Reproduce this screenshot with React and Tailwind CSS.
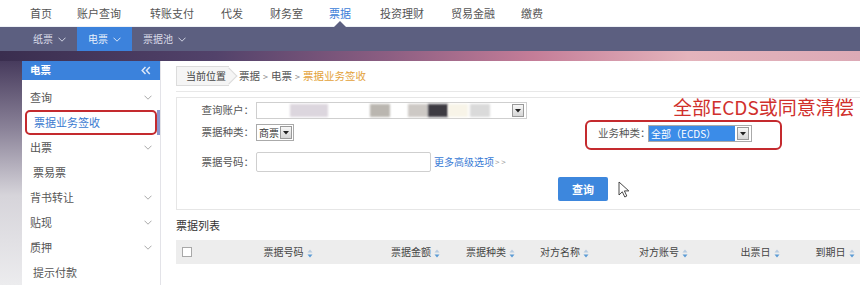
import React from "react";

const navItems = [
  ["首页", "ml-[30px]"],
  ["账户查询", "ml-[25px]"],
  ["转账支付", "ml-[29px]"],
  ["代发", "ml-[27px]"],
  ["财务室", "ml-[27px]"],
  ["票据", "ml-[26px]"],
  ["投资理财", "ml-[29px]"],
  ["贸易金融", "ml-[27px]"],
  ["缴费", "ml-[26px]"],
];

const Chev = ({ className = "", color = "currentColor" }) => (
  <svg width="8" height="5" viewBox="0 0 8 5" className={className}>
    <path d="M0.5 0.7L4 4.2L7.5 0.7" fill="none" stroke={color} strokeWidth="1" />
  </svg>
);

const Sort = () => (
  <svg width="6" height="9" viewBox="0 0 6 9" className="ml-[3px] mt-[3px]">
    <path d="M3 0.5L5.5 3.5H0.5Z" fill="#b7cbe0" />
    <path d="M3 8.5L5.5 5.5H0.5Z" fill="#5b9bd5" />
  </svg>
);

const DropBtn = () => (
  <div className="w-[12px] h-[13px] border border-[#9a9a9a] bg-gradient-to-b from-[#f7f7f7] to-[#d6d6d6] flex items-center justify-center shrink-0">
    <svg width="6" height="4" viewBox="0 0 6 4">
      <path d="M0 0H6L3 3.5Z" fill="#222" />
    </svg>
  </div>
);

const sideItems = [
  { t: "查询", chev: true },
  { t: "票据业务签收", sel: true },
  { t: "出票", chev: true },
  { t: "票易票", indent: true },
  { t: "背书转让", chev: true },
  { t: "贴现", chev: true },
  { t: "质押", chev: true },
  { t: "提示付款", indent: true },
];

const cols = [
  ["票据号码", "w-[176px]"],
  ["票据金额", "w-[79px]"],
  ["票据种类", "w-[71px]"],
  ["对方名称", "w-[77px]"],
  ["对方账号", "w-[121px]"],
  ["出票日", "w-[72px]"],
  ["到期日", "w-[78px]"],
];

export default function App() {
  return (
    <div className="relative w-[860px] h-[285px] overflow-hidden bg-white font-['Noto_Sans_CJK_SC',sans-serif] text-[#555] leading-none">
      {/* top nav */}
      <div className="h-[27px] flex items-stretch bg-white text-[11px] border-b border-[#eef1f6]">
        {navItems.map(([t, ml]) => (
          <div key={t} className={`relative flex items-center ${ml} ${t === "票据" ? "text-[#3b7dd8]" : "text-[#555]"}`}>
            {t}
            {t === "票据" && (
              <div className="absolute bottom-[-1px] left-1/2 -translate-x-1/2 w-0 h-0 border-l-[6px] border-r-[6px] border-b-[6px] border-l-transparent border-r-transparent border-b-[#5c5f80]" />
            )}
          </div>
        ))}
      </div>

      {/* sub nav */}
      <div className="h-[24px] bg-[#5c5f80] flex items-stretch pl-[22px] text-[10px] text-[#d9dbe8]">
        <div className="flex items-center px-[11px] gap-[5px]">
          <span>纸票</span>
          <Chev color="#cfd2e2" />
        </div>
        <div className="flex items-center px-[11px] gap-[5px] bg-[#3c82dc] text-[#e8f0fb] w-[55px]">
          <span>电票</span>
          <Chev color="#d6e4f7" />
        </div>
        <div className="flex items-center px-[11px] gap-[5px]">
          <span>票据池</span>
          <Chev color="#cfd2e2" />
        </div>
      </div>

      {/* strip */}
      <div className="h-[10px] bg-[linear-gradient(90deg,#3a2e4f_0%,#52426a_25%,#8c5e82_45%,#c47d98_62%,#e4b4bc_80%,#dcaab6_100%)]" />

      {/* body */}
      <div className="flex h-[224px]">
        <div className="w-[22px] shrink-0 bg-[linear-gradient(180deg,#473b5d_0%,#8a8298_30%,#d6d4da_60%,#ececee_100%)]" />

        {/* sidebar */}
        <div className="w-[138px] shrink-0 bg-white flex flex-col">
          <div className="h-[24px] bg-[#3b82dc] flex items-center justify-between pl-[8px] pr-[9px]">
            <span className="text-white font-bold text-[10.5px]">电票</span>
            <svg width="10" height="9" viewBox="0 0 10 9">
              <path d="M4.5 1L1.2 4.5L4.5 8M8.8 1L5.5 4.5L8.8 8" fill="none" stroke="#dce8f9" strokeWidth="1.5" />
            </svg>
          </div>
          <div className="pt-[5px] flex flex-col">
            {sideItems.map((it) =>
              it.sel ? (
                <div key={it.t} className="h-[25px] flex items-stretch">
                  <div className="flex-1 ml-[3px] border-2 border-[#c42a2e] rounded-[5px] flex items-center pl-[7px] text-[11px] text-[#3a7ad0]">
                    {it.t}
                  </div>
                  <div className="w-[3px] bg-[#8a96cc]" />
                </div>
              ) : (
                <div
                  key={it.t}
                  className={`h-[25px] flex items-center justify-between pr-[8px] text-[11px] text-[#555] ${it.indent ? "pl-[11px]" : "pl-[8px]"}`}
                >
                  <span>{it.t}</span>
                  {it.chev && <Chev color="#aaaaaa" />}
                </div>
              )
            )}
          </div>
        </div>

        {/* main */}
        <div className="flex-1 min-w-0 overflow-hidden bg-white border-l border-[#e3e3e8] pl-[15px] flex flex-col">
          {/* breadcrumb */}
          <div className="h-[31px] shrink-0 border-b border-[#e8e8e8] flex items-center text-[10.5px]">
            <div className="relative h-[20px] pl-[9px] pr-[3px] bg-[#f5f5f5] border border-r-0 border-[#dcdcdc] flex items-center text-[#444]">
              <div className="absolute right-[-6px] top-[3px] w-[12px] h-[12px] rotate-45 bg-[#f5f5f5] border-t border-r border-[#dcdcdc]" />
              <span className="relative z-10 text-[10px]">当前位置</span>
            </div>
            <span className="ml-[10px] text-[#555]">票据</span>
            <span className="mx-[3px] text-[#888] text-[9px]">&gt;</span>
            <span className="text-[#555]">电票</span>
            <span className="mx-[3px] text-[#888] text-[9px]">&gt;</span>
            <span className="text-[#e3a23a]">票据业务签收</span>
          </div>

          {/* form panel */}
          <div className="mt-[5px] h-[113px] shrink-0 border border-r-0 border-[#e6e6e6] pt-[4px] flex flex-col text-[10.5px]">
            {/* row 1 */}
            <div className="h-[17px] flex items-center">
              <div className="w-[77px] shrink-0 text-right whitespace-nowrap text-[#555]">查询账户：</div>
              <div className="ml-[2px] w-[271px] shrink-0 h-[17px] border border-[#cfcfcf] flex items-center bg-white">
                <div className="ml-[33px] w-[38px] h-[13px] bg-[#dcd6de] blur-[1px]" />
                <div className="ml-[42px] w-[20px] h-[13px] bg-[#bab6b0] blur-[1px]" />
                <div className="ml-[18px] w-[20px] h-[13px] bg-[#cdc9c5] blur-[1px]" />
                <div className="w-[20px] h-[13px] bg-[#3d3b42] blur-[1px]" />
                <div className="w-[20px] h-[13px] bg-[#f8f4e8] blur-[1px]" />
                <div className="ml-[2px] w-[20px] h-[13px] bg-[#dadada] blur-[1px]" />
                <div className="ml-auto mr-[2px]">
                  <DropBtn />
                </div>
              </div>
            </div>

            {/* row 2 */}
            <div className="mt-[1px] h-[30px] flex items-start">
              <div className="mt-[4px] h-[17px] flex items-center">
                <div className="w-[77px] shrink-0 text-right whitespace-nowrap text-[#555]">票据种类：</div>
                <div className="ml-[2px] w-[38px] shrink-0 h-[17px] border border-[#aaaaaa] flex items-center justify-between pl-[2px] pr-[1px] bg-white">
                  <span className="text-[10px] text-[#333] whitespace-nowrap">商票</span>
                  <DropBtn />
                </div>
              </div>
              <div className="ml-[291px] w-[197px] shrink-0 h-[30px] border-2 border-[#c42a2e] rounded-[6px] pl-[11px] pt-[3px] flex items-start">
                <div className="h-[17px] flex items-center">
                  <div className="w-[50px] shrink-0 whitespace-nowrap text-[#555]">业务种类：</div>
                  <div className="w-[104px] shrink-0 h-[17px] border border-[#aaaaaa] flex items-center bg-white">
                    <div className="w-[86px] h-full bg-[#3b8ce8] text-white text-[10px] flex items-center pl-[2px] whitespace-nowrap">
                      全部（ECDS）
                    </div>
                    <div className="ml-[2px]">
                      <DropBtn />
                    </div>
                  </div>
                </div>
              </div>
            </div>

            {/* row 3 */}
            <div className="mt-[2px] h-[20px] flex items-center">
              <div className="w-[77px] shrink-0 text-right whitespace-nowrap text-[#555]">票据号码：</div>
              <div className="ml-[2px] w-[175px] shrink-0 h-[20px] border border-[#cfcfcf] rounded-[2px] bg-white" />
              <span className="ml-[3px] text-[#3a7bd5] text-[10px] whitespace-nowrap">更多高级选项</span>
              <span className="ml-[1px] text-[#999] text-[8px] whitespace-nowrap">&gt; &gt;</span>
            </div>

            {/* button row */}
            <div className="mt-[5px] pl-[381px] flex items-start">
              <div className="w-[50px] shrink-0 h-[24px] rounded-[2px] bg-[#3d87dd] text-white text-[11px] font-bold flex items-center justify-center">
                查询
              </div>
              <svg width="12" height="17" viewBox="0 0 12 17" className="ml-[10px] mt-[4px] shrink-0">
                <path d="M1 1L1 14L4.3 10.8L6.8 16L8.8 15L6.4 9.9L10.8 9.9Z" fill="#fff" stroke="#333" strokeWidth="0.9" strokeLinejoin="round" />
              </svg>
            </div>
          </div>

          {/* list title */}
          <div className="h-[30px] shrink-0 flex items-center text-[11px] text-[#333]">票据列表</div>

          {/* table header */}
          <div className="h-[24px] shrink-0 bg-[#ededed] flex items-center text-[10px] text-[#444]">
            <div className="w-[24px] shrink-0 pl-[6px]">
              <div className="w-[10px] h-[10px] border border-[#a8a8a8] bg-white" />
            </div>
            {cols.map(([t, w]) => (
              <div key={t} className={`${w} shrink-0 flex items-center justify-center whitespace-nowrap`}>
                <span>{t}</span>
                <Sort />
              </div>
            ))}
          </div>
        </div>
      </div>

      {/* annotation */}
      <div className="absolute left-[673px] top-[97px] text-[19px] leading-none text-[#d0302c] whitespace-nowrap">
        全部ECDS或同意清偿
      </div>
    </div>
  );
}
